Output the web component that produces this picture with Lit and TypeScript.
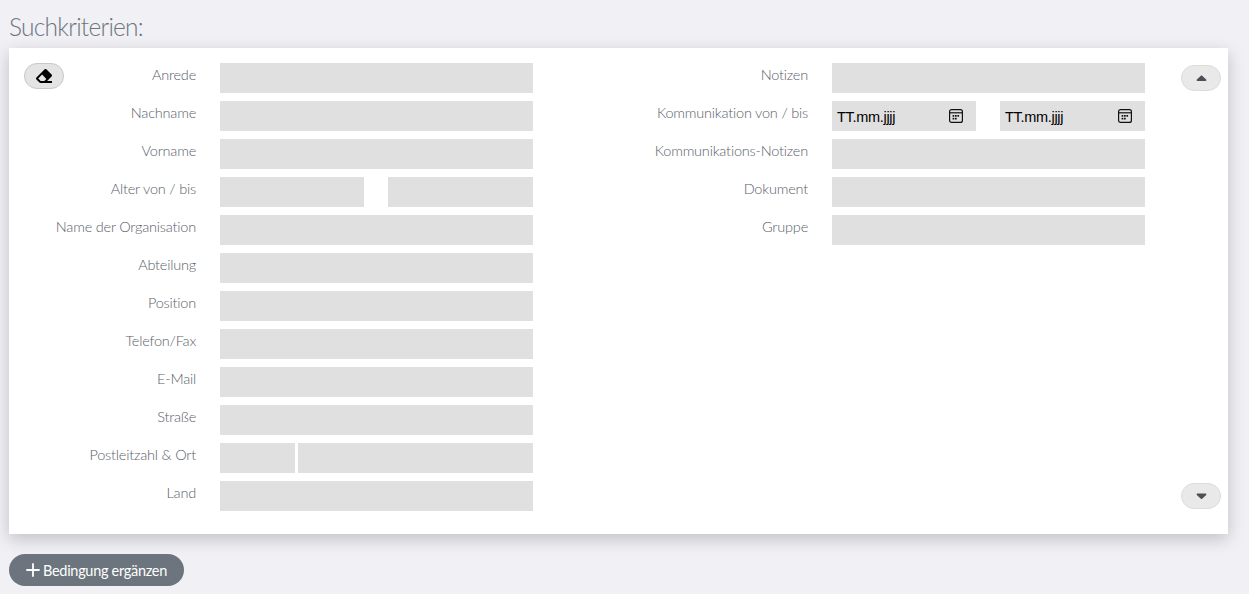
import { LitElement, html, css, svg } from "lit";
import { customElement } from "lit/decorators.js";

const caret = (down: boolean) => html`<svg class="caret" viewBox="0 0 12 7" width="11" height="6.500" aria-hidden="true">
  <path fill="#495057" d=${down ? "M1.6 .5h8.8c.9 0 1.3 1 .7 1.6L6.7 6.2c-.4.4-1 .4-1.4 0L.9 2.100C.3 1.500.7.5 1.600.5z" : "M1.6 6.500h8.800c.9 0 1.300-1 .7-1.600L6.700.8c-.4-.4-1-.4-1.400 0L.9 4.900c-.6.6-.2 1.600.7 1.600z"}></path>
</svg>`;

const calendar = html`<svg class="cal" viewBox="0 0 14 14" width="14" height="14" aria-hidden="true">
  <rect x=".6" y=".6" width="12.800" height="12.800" rx="2" fill="none" stroke="#111" stroke-width="1.200"></rect>
  <path d="M1 3.800h12" stroke="#111" stroke-width="1.200"></path>
  ${[3.6, 6, 8.4].map((x) => svg`<rect x=${x} y="6" width="1.700" height="1.700" fill="#111"></rect>`)}
  ${[3.6, 6].map((x) => svg`<rect x=${x} y="8.800" width="1.700" height="1.700" fill="#111"></rect>`)}
</svg>`;

const eraser = html`<svg viewBox="0 0 512 512" width="16" height="16" aria-hidden="true"><path fill="#000" d="M497.941 273.941c18.745-18.745 18.745-49.137 0-67.882l-160-160c-18.745-18.745-49.137-18.745-67.882 0l-256 256c-18.745 18.745-18.745 49.137 0 67.882l96 96A48.004 48.004 0 0 0 144 480h356c6.627 0 12-5.373 12-12v-40c0-6.627-5.373-12-12-12H355.883l142.058-142.059zm-302.627-62.627l137.373 137.373L265.373 416H150.628l-80-80 124.686-124.686z"></path></svg>`;

type Row = { label: string; kind?: "split" | "zip" | "date" };

const LEFT: Row[] = [
  { label: "Anrede" },
  { label: "Nachname" },
  { label: "Vorname" },
  { label: "Alter von / bis", kind: "split" },
  { label: "Name der Organisation" },
  { label: "Abteilung" },
  { label: "Position" },
  { label: "Telefon/Fax" },
  { label: "E-Mail" },
  { label: "Straße" },
  { label: "Postleitzahl & Ort", kind: "zip" },
  { label: "Land" },
];
const RIGHT: Row[] = [
  { label: "Notizen" },
  { label: "Kommunikation von / bis", kind: "date" },
  { label: "Kommunikations-Notizen" },
  { label: "Dokument" },
  { label: "Gruppe" },
];

@customElement("app-root")
export class AppRoot extends LitElement {
  static styles = css`
    :host {
      display: block;
      min-height: 594px;
      background: #f0f0f5;
      font-family: "Lato", "Liberation Sans", sans-serif;
      box-sizing: border-box;
      padding: 12px 21px 8px 9px;
    }
    h1 {
      margin: 0 0 7px;
      font-size: 24.500px;
      line-height: 29px;
      font-weight: 300;
      color: #6c757d;
      letter-spacing: -0.75px;
    }
    .card {
      display: flex;
      background: #fff;
      height: 486px;
      box-sizing: border-box;
      padding: 15px 7px 23px 15px;
      box-shadow: 0 5px 16px rgba(0, 0, 0, 0.2);
    }
    .side {
      width: 40px;
      flex: none;
      display: flex;
      flex-direction: column;
      justify-content: space-between;
    }
    .side.right {
      margin-left: 36px;
      padding: 2px 0;
    }
    .form {
      display: grid;
      grid-auto-rows: 30px;
      row-gap: 8px;
      column-gap: 24px;
      grid-template-columns: 132px 313px;
      align-content: start;
    }
    .form.second {
      margin-left: 75px;
      grid-template-columns: 200px 313px;
    }
    label {
      text-align: right;
      color: #596169;
      font-size: 14.500px;
      font-weight: 300;
      line-height: 24px;
      white-space: nowrap;
      letter-spacing: -0.2px;
      justify-self: end;
    }
    .field {
      background: #e0e0e0;
      height: 30px;
      min-width: 0;
    }
    .split {
      display: grid;
      grid-template-columns: 144px 145px;
      column-gap: 24px;
    }
    .zip {
      display: grid;
      grid-template-columns: 75px 235px;
      column-gap: 3px;
    }
    .date {
      display: flex;
      align-items: center;
      justify-content: space-between;
      padding: 0 13px 0 5px;
      box-sizing: border-box;
      font-family: "Liberation Sans", sans-serif;
      font-size: 14.500px;
      letter-spacing: -0.3px;
      color: #000;
    }
    .date span {
      padding-top: 2px;
    }
    button {
      width: 40px;
      height: 26px;
      padding: 0;
      border-radius: 13px;
      border: 1px solid #dcdcdc;
      background: #e9e9e9;
      display: flex;
      align-items: center;
      justify-content: center;
    }
    button.erase {
      background: #e4e4e4;
      border-color: #c8c8c8;
    }
    .add {
      margin-top: 20px;
      width: 175px;
      height: 32px;
      border: 0;
      border-radius: 16px;
      background: #6c757d;
      color: #fff;
      font-family: "Lato", sans-serif;
      font-size: 14.500px;
      gap: 3px;
      letter-spacing: -0.3px;
    }
  `;

  private field(kind?: Row["kind"]) {
    if (kind === "split")
      return html`<div class="split"><div class="field"></div><div class="field"></div></div>`;
    if (kind === "zip")
      return html`<div class="zip"><div class="field"></div><div class="field"></div></div>`;
    if (kind === "date")
      return html`<div class="split">
        <div class="field date"><span>TT.mm.jjjj</span>${calendar}</div>
        <div class="field date"><span>TT.mm.jjjj</span>${calendar}</div>
      </div>`;
    return html`<div class="field"></div>`;
  }

  private rows(rows: Row[]) {
    return rows.map((r) => html`<label>${r.label}</label>${this.field(r.kind)}`);
  }

  render() {
    return html`
      <h1>Suchkriterien:</h1>
      <div class="card">
        <div class="side"><button class="erase" aria-label="Zurücksetzen">${eraser}</button></div>
        <div class="form">${this.rows(LEFT)}</div>
        <div class="form second">${this.rows(RIGHT)}</div>
        <div class="side right">
          <button aria-label="Nach oben">${caret(false)}</button>
          <button aria-label="Nach unten">${caret(true)}</button>
        </div>
      </div>
      <button class="add">
        <svg viewBox="0 0 14 14" width="14" height="14" aria-hidden="true"><path d="M7 1v12M1 7h12" stroke="#fff" stroke-width="1.800" stroke-linecap="round"></path></svg>
        Bedingung ergänzen
      </button>
    `;
  }
}
